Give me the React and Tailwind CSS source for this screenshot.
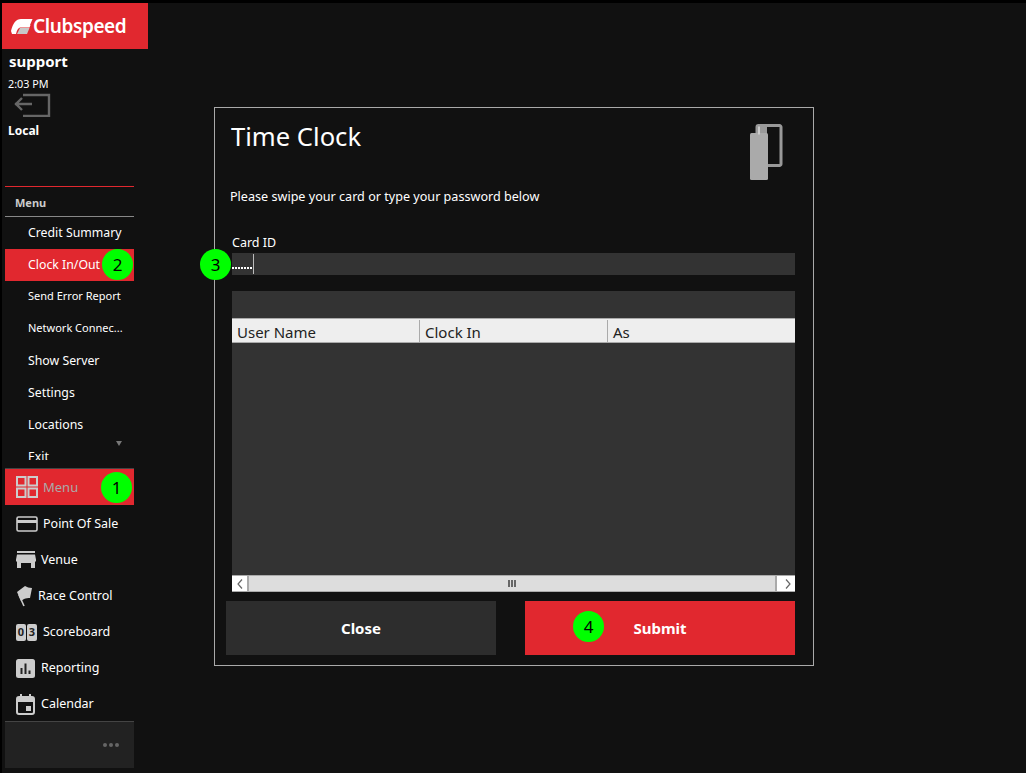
import React from 'react';

const menuItems = [
  { label: 'Credit Summary', size: 'text-[12.3px]' },
  { label: 'Clock In/Out', size: 'text-[12.3px]' },
  { label: 'Send Error Report', size: 'pb-[2px] text-[11px]' },
  { label: 'Network Connec...', size: 'pb-[2px] text-[11px]' },
  { label: 'Show Server', size: 'text-[12.3px]' },
  { label: 'Settings', size: 'text-[12.3px]' },
  { label: 'Locations', size: 'text-[12.3px]' },
  { label: 'Exit', size: 'text-[12.3px]' },
];

const Badge = ({ n, className }) => (
  <span className={`absolute flex h-[31px] w-[31px] items-center justify-center rounded-full bg-[#00ff00] text-[17px] font-normal text-black ${className}`}>{n}</span>
);

const GridIcon = () => (
  <svg width="22" height="22" viewBox="0 0 22 22" fill="none" stroke="#ccc" strokeWidth="2">
    <rect x="1" y="1" width="8.5" height="8.5" />
    <rect x="12.5" y="1" width="8.5" height="8.5" />
    <rect x="1" y="12.5" width="8.5" height="8.5" />
    <rect x="12.5" y="12.5" width="8.5" height="8.5" />
  </svg>
);

const CardIcon = () => (
  <svg width="22" height="16" viewBox="0 0 22 16" fill="none">
    <rect x="1" y="1" width="20" height="14" rx="1.5" stroke="#ccc" strokeWidth="1.6" />
    <rect x="1" y="4" width="20" height="3" fill="#ccc" />
  </svg>
);

const StoreIcon = () => (
  <svg width="20" height="18" viewBox="0 0 20 18" fill="#ccc">
    <rect x="1" y="0" width="18" height="2" />
    <path d="M1 3.500h18l1 5v2h-1v6.500h-4v-5h-10v5h-4v-6.500h-1v-2z" />
    <rect x="5" y="12" width="7" height="3" fill="#111" />
  </svg>
);

const FlagIcon = () => (
  <svg width="17" height="22" viewBox="0 0 17 22" fill="#ccc">
    <path d="M1 7L9 1c2 1 4 2 7 2L14 13c-2 0-4 0-6 1L5 16z" />
    <path d="M3 10l5 11" stroke="#ccc" strokeWidth="1.6" />
  </svg>
);

const ScoreIcon = () => (
  <span className="flex gap-px">
    <span className="flex h-[17px] w-[10px] items-center justify-center rounded-[2px] bg-[#ccc] text-[11px] font-bold text-[#222]">0</span>
    <span className="flex h-[17px] w-[10px] items-center justify-center rounded-[2px] bg-[#ccc] text-[11px] font-bold text-[#222]">3</span>
  </span>
);

const ChartIcon = () => (
  <svg width="19" height="19" viewBox="0 0 19 19">
    <rect width="19" height="19" rx="2.5" fill="#ccc" />
    <rect x="4.5" y="9" width="2" height="6" fill="#222" />
    <rect x="8.5" y="4.5" width="2" height="10.5" fill="#222" />
    <rect x="12.5" y="11.5" width="2" height="3.5" fill="#222" />
  </svg>
);

const CalendarIcon = () => (
  <svg width="19" height="21" viewBox="0 0 19 21" fill="none">
    <rect x="1" y="3" width="17" height="17" rx="2" stroke="#ccc" strokeWidth="2" />
    <rect x="1" y="3" width="17" height="5" fill="#ccc" />
    <rect x="4" y="0" width="2" height="4" fill="#ccc" />
    <rect x="13" y="0" width="2" height="4" fill="#ccc" />
    <rect x="10" y="12" width="5" height="5" fill="#ccc" />
  </svg>
);

const navItems = [
  { label: 'Point Of Sale', icon: <CardIcon />, gap: 'gap-[5px]' },
  { label: 'Venue', icon: <StoreIcon />, gap: 'gap-[5px]' },
  { label: 'Race Control', icon: <FlagIcon />, gap: 'gap-[5px]' },
  { label: 'Scoreboard', icon: <ScoreIcon />, gap: 'gap-[6px]' },
  { label: 'Reporting', icon: <ChartIcon />, gap: 'gap-[6px]' },
  { label: 'Calendar', icon: <CalendarIcon />, gap: 'gap-[6px]' },
];

const Sidebar = () => (
  <div className="flex w-[146px] shrink-0 flex-col">
    <div className="flex h-[46px] items-center bg-[#e1282f] pl-[9px] pt-[1px]">
      <svg width="22" height="15" viewBox="0 0 22 15">
        <path d="M21.500 0H10C5 0 2 4 0 12l1 3h4c1-4 2-6 4-6.500h9.500l1-2.500H9.500z" fill="#fff" />
        <path d="M21.500 0L19 6H9C11 2 13 0 16 0z" fill="#fff" />
        <path d="M9 9h9.500L16 15H6z" fill="#c8c8c8" />
      </svg>
      <span className="text-[19px] font-semibold leading-none tracking-[-0.4px] text-white">Clubspeed</span>
    </div>
    <div className="flex h-[137px] flex-col pl-[6px]">
      <div className="mt-[2px] pl-px text-[15px] font-bold leading-[20px] text-white">support</div>
      <div className="mt-[5px] text-[10.8px] leading-[15px] text-white">2:03 PM</div>
      <svg width="38" height="24" viewBox="0 0 38 24" fill="none" className="ml-[5px] mt-[2px]">
        <path d="M10 2h26v21h-26M2 11h17M9 5l-6 6 6 6" stroke="#666" strokeWidth="2.4" />
      </svg>
      <div className="mt-[6px] text-[12px] font-bold leading-[16px] text-white">Local</div>
    </div>
    <div className="ml-[3px] w-[129px]">
      <div className="h-px bg-[#e1282f]" />
      <div className="flex h-[30px] items-center border-b border-[#888] pl-[10px] pt-[3px] text-[11px] font-bold text-[#ccc]">Menu</div>
      <div className="relative mb-[8px] h-[243px] overflow-hidden">
        {menuItems.map((item) => (
          <div key={item.label} className={`flex h-[32px] items-center pl-[23px] text-white ${item.size} ${item.label === 'Clock In/Out' ? 'bg-[#e1282f]' : ''}`}>
            {item.label}
          </div>
        ))}
        <div className="absolute bottom-[14px] right-[12px] h-0 w-0 border-x-[3.5px] border-t-[5px] border-x-transparent border-t-[#777]" />
        <Badge n="2" className="left-[97px] top-[32px]" />
      </div>
      <div className="relative flex h-[37px] items-center gap-[5px] border-t border-[#444] bg-[#e1282f] pl-[11px] text-[13px] text-[#aaa]">
        <GridIcon />
        <span className="pt-[2px]">Menu</span>
        <Badge n="1" className="left-[96px] top-[3px]" />
      </div>
      <div className="mt-px flex flex-col">
        {navItems.map((item) => (
          <div key={item.label} className={`flex h-[36px] items-center pl-[11px] text-[12.5px] text-white ${item.gap}`}>
            {item.icon}
            <span>{item.label}</span>
          </div>
        ))}
      </div>
      <div className="mt-[-1px] flex h-[47px] items-center justify-end gap-[2px] border-t border-[#444] bg-[#222] pr-[15px]">
        <span className="h-[4px] w-[4px] rounded-full bg-[#666]" />
        <span className="h-[4px] w-[4px] rounded-full bg-[#666]" />
        <span className="h-[4px] w-[4px] rounded-full bg-[#666]" />
      </div>
    </div>
  </div>
);

const Scrollbar = () => (
  <div className="flex h-[17px] border-y border-[#aaa] bg-[#ddd]">
    <div className="flex w-[17px] items-center justify-center border-r-2 border-[#aaa] bg-white">
      <svg width="6" height="10" viewBox="0 0 6 10" fill="none" stroke="#666" strokeWidth="1.2"><path d="M5 0.5L1 5l4 4.500" /></svg>
    </div>
    <div className="flex flex-1 items-center justify-center gap-px">
      <span className="h-[7px] w-[2px] bg-[#666]" />
      <span className="h-[7px] w-[2px] bg-[#666]" />
      <span className="h-[7px] w-[2px] bg-[#666]" />
    </div>
    <div className="flex w-[20px] items-center justify-center border-l-2 border-[#aaa] bg-white pl-[3px]">
      <svg width="6" height="10" viewBox="0 0 6 10" fill="none" stroke="#666" strokeWidth="1.2"><path d="M1 0.5L5 5l-4 4.500" /></svg>
    </div>
  </div>
);

const TimeClock = () => (
  <div className="ml-[66px] mt-[104px] flex h-[559px] w-[600px] flex-col border border-[#aaa]">
    <div className="flex h-[81px] justify-between pl-[16px] pr-[30px] pt-[11px]">
      <h1 className="text-[25.6px] leading-[36px] text-white">Time Clock</h1>
      <svg width="33" height="57" viewBox="0 0 33 57" className="mt-[5px]" fill="none">
        <path d="M7 9V3A1.500 1.500 0 0 1 8.500 1.500h21A1.500 1.500 0 0 1 31 3v37a1.500 1.500 0 0 1-1.500 1.500H15" stroke="#999" strokeWidth="3" />
        <rect x="6" y="1" width="11" height="12" rx="1.500" fill="#999" />
        <rect x="0" y="9" width="18" height="47" rx="1.500" fill="#aaa" />
        <rect x="8" y="2.500" width="2" height="8" fill="#ccc" />
      </svg>
    </div>
    <div className="pl-[15px] text-[12.6px] leading-[16px] text-white">Please swipe your card or type your password below</div>
    <div className="mt-[30px] pl-[17px] text-[12.5px] leading-[16px] text-white">Card ID</div>
    <div className="relative ml-[17px] mr-[18px] mt-[2px] flex h-[22px] items-center bg-[#333]">
      <span className="flex h-full w-[21px] items-end gap-px overflow-hidden pb-[6px]">
        {[...Array(7)].map((_, i) => (
          <span key={i} className="h-[2px] w-[2px] shrink-0 bg-white" />
        ))}
      </span>
      <span className="h-[20px] w-px bg-[#bbb]" />
      <Badge n="3" className="left-[-32px] top-[-4px]" />
    </div>
    <div className="ml-[17px] mr-[18px] mt-[16px] flex h-[301px] flex-col bg-[#333]">
      <div className="mt-[27px] flex h-[25px] border-y border-[#aaa] bg-[#eee] pt-px text-[15px] leading-[25px] text-[#222]">
        <div className="w-[188px] border-r border-[#aaa] pl-[5px]">User Name</div>
        <div className="w-[188px] border-r border-[#aaa] pl-[5px]">Clock In</div>
        <div className="flex-1 pl-[5px]">As</div>
      </div>
      <div className="flex-1" />
      <Scrollbar />
    </div>
    <div className="ml-[11px] mr-[18px] mt-[9px] flex justify-between">
      <button className="h-[54px] w-[270px] bg-[#2d2d2d] text-[15px] font-bold text-white">Close</button>
      <button className="relative h-[54px] w-[270px] bg-[#e1282f] text-[15px] font-bold text-white">
        Submit
        <Badge n="4" className="left-[48px] top-[10px]" />
      </button>
    </div>
  </div>
);

export default function App() {
  return (
    <div className="h-[773px] w-[1026px] overflow-hidden bg-black pl-[2px] pt-[3px] font-['Noto_Sans',sans-serif]">
      <div className="flex h-[770px] bg-[#111]">
        <Sidebar />
        <TimeClock />
      </div>
    </div>
  );
}
